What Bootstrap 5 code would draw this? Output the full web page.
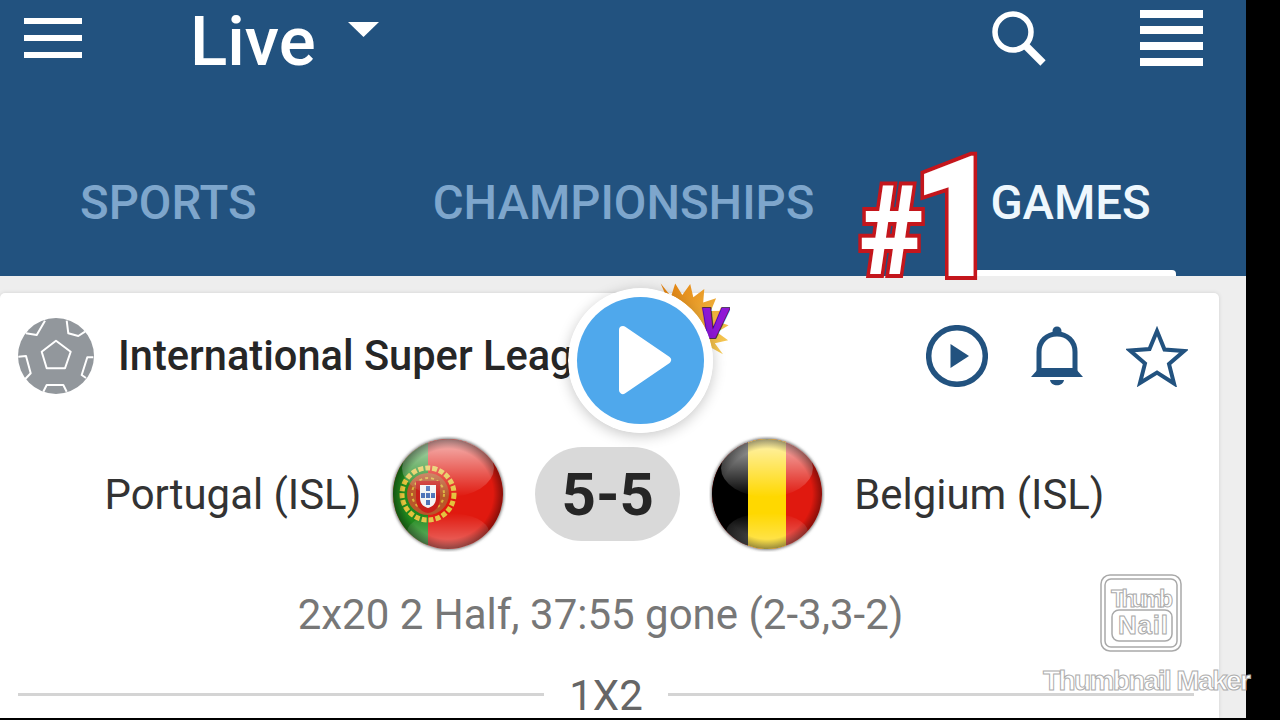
<!DOCTYPE html>
<html lang="en">
<head>
  <meta charset="UTF-8" />
  <title>Live - International Super League</title>
  <link href="https://cdn.jsdelivr.net/npm/bootstrap@5.3.3/dist/css/bootstrap.min.css" rel="stylesheet" />
  <style>
    html, body {
      height: 100%;
      overflow: hidden;
    }
    body {
      background-color: #000;
      font-family: Roboto, "Liberation Sans", sans-serif;
    }
    .app-frame {
      width: 1246px;
      height: 718px;
      background-color: #eeeeee;
      overflow: hidden;
    }
    .app-header {
      height: 276px;
      background-color: #22527f;
      flex-shrink: 0;
    }
    .top-row {
      height: 100px;
      padding-left: 24px;
      padding-right: 43px;
    }
    .burger-icon {
      width: 58px;
      height: 40px;
      margin-top: 18px;
    }
    .page-title {
      margin-left: 108px;
      margin-top: 4px;
      font-size: 69px;
      line-height: 76px;
      font-weight: 500;
      color: #fff;
    }
    .caret-icon {
      width: 31px;
      height: 15px;
      margin-left: 32px;
      margin-top: 22px;
    }
    .search-icon {
      width: 56px;
      height: 56px;
      margin-top: 10px;
    }
    .lines-icon {
      width: 63px;
      height: 56px;
      margin-top: 10px;
      margin-left: 93px;
    }
    .tab-row {
      padding-left: 80px;
      gap: 176px;
      margin-top: 78px;
    }
    .tab-link {
      position: relative;
      font-size: 47.300px;
      line-height: 50px;
      font-weight: 500;
      color: #7ea6cc;
    }
    .tab-link.is-active {
      color: #eef7fd;
    }
    .tab-link.is-active::after {
      content: "";
      position: absolute;
      left: -16px;
      right: -25px;
      top: 92px;
      height: 6px;
      background-color: #fff;
      border-radius: 4px 4px 0 0;
    }
    .match-card {
      width: 1219px;
      margin-top: 17px;
      background-color: #fff;
      border: 0;
      border-radius: 5px 5px 0 0;
      box-shadow: 0 0 4px rgba(0, 0, 0, 0.12);
      flex-grow: 1;
    }
    .league-row {
      height: 125px;
      padding-left: 18px;
      padding-right: 31px;
    }
    .ball-icon {
      width: 76px;
      height: 76px;
    }
    .league-name {
      margin-left: 24px;
      font-size: 41.600px;
      font-weight: 500;
      color: #262626;
      line-height: 48px;
      white-space: nowrap;
    }
    .action-icons {
      gap: 38px;
    }
    .action-icons svg {
      width: 62px;
      height: 62px;
    }
    .score-row {
      height: 112px;
      margin-top: 20px;
      padding-right: 10px;
      gap: 31px;
    }
    .team-name {
      padding-top: 2px;
      font-size: 41.900px;
      line-height: 48px;
      color: #333;
      white-space: nowrap;
    }
    .team-flag {
      width: 116px;
      height: 116px;
      margin: -2px;
    }
    .score-pill {
      width: 145px;
      height: 94px;
      padding-top: 2px;
      border-radius: 47px;
      background-color: #d9d9d9;
      font-size: 60px;
      font-weight: 700;
      color: #262626;
    }
    .match-status {
      margin-top: 41px;
      padding-right: 18px;
      font-size: 42px;
      line-height: 48px;
      color: #777;
    }
    .market-row {
      margin-top: 37px;
      padding-left: 18px;
      padding-right: 25px;
      gap: 25px;
      font-size: 42px;
      line-height: 40px;
      color: #666;
    }
    .market-line {
      height: 3px;
      margin-bottom: 3px;
      background-color: #d4d4d4;
      flex-grow: 1;
    }
    /* things the thumbnail maker put on top of the screenshot */
    .rank-badge {
      position: absolute;
      left: 858px;
      top: 126px;
      height: 160px;
      color: #fff;
      font-family: Roboto, sans-serif;
      font-weight: 900;
      -webkit-text-stroke: 8px #c4161c;
      paint-order: stroke fill;
    }
    .rank-hash {
      position: absolute;
      left: -2px;
      top: 36px;
      font-size: 124px;
      line-height: 140px;
      transform: scaleX(0.88);
    }
    .rank-one {
      position: absolute;
      left: 49px;
      top: 3px;
      font-size: 168px;
      line-height: 180px;
      transform: scaleX(0.9);
    }
    .sticker {
      position: absolute;
      left: 640px;
      top: 275px;
      width: 90px;
      height: 90px;
    }
    .play-overlay {
      position: absolute;
      left: 568px;
      top: 288px;
      width: 145px;
      height: 145px;
      box-shadow: 0 3px 14px rgba(0, 0, 0, 0.22);
      border-radius: 50%;
    }
    .mark-logo {
      position: absolute;
      left: 1100px;
      top: 574px;
      width: 82px;
      height: 78px;
    }
    .mark-text {
      position: absolute;
      left: 1043px;
      top: 664px;
      font-family: "Liberation Sans", sans-serif;
      font-size: 28px;
      line-height: 34px;
      font-weight: 700;
      letter-spacing: -1.600px;
      white-space: nowrap;
      color: #fff;
      -webkit-text-stroke: 1px #adadad;
    }
    .logo-text {
      font-family: "Liberation Sans", sans-serif;
      font-weight: 700;
      fill: #fff;
      stroke: #a9a9a9;
      stroke-width: 1;
    }
  </style>
</head>
<body>
  <div class="app-frame d-flex flex-column">
    <div class="app-header">
      <div class="top-row d-flex align-items-start">
        <svg class="burger-icon" viewBox="0 0 58 40"><path fill="#fff" d="M0 0h58v6H0zM0 17h58v6H0zM0 34h58v6H0z"/></svg>
        <div class="page-title">Live</div>
        <svg class="caret-icon" viewBox="0 0 31 15"><path fill="#fff" d="M0 0h31L15.500 15z"/></svg>
        <svg class="search-icon ms-auto" viewBox="0 0 56 56"><circle cx="22" cy="22" r="18" fill="none" stroke="#fff" stroke-width="5.500"/><path d="M34 35l18 18" stroke="#fff" stroke-width="7.500" fill="none"/></svg>
        <svg class="lines-icon" viewBox="0 0 63 56"><path fill="#fff" d="M0 0h63v8H0zM0 16h63v8H0zM0 32h63v8H0zM0 48h63v8H0z"/></svg>
      </div>
      <div class="tab-row d-flex">
        <div class="tab-link">SPORTS</div>
        <div class="tab-link">CHAMPIONSHIPS</div>
        <div class="tab-link is-active">GAMES</div>
      </div>
    </div>

    <div class="card match-card">
      <div class="league-row d-flex align-items-center">
        <svg class="ball-icon" viewBox="0 0 76 76">
          <circle cx="38" cy="38" r="38" fill="#92979c"/>
          <g fill="none" stroke="#fff" stroke-width="2" stroke-linejoin="round">
            <path d="M38 22.700l14.700 11-5.700 16.600H28.700l-5-16.600z"/>
            <path d="M8 15.300l10.700 1.700L27 2.700M48.700 2.700L50.300 15.300l10 2.700 6.700-4.300M.3 38.700L8 38l4.700 17.300-5.700 6M75.300 39.300h-6l-5.600 17.700 4.300 3M25.300 73.700l3.400-6.700h16.600l3.400 6.700"/>
          </g>
        </svg>
        <div class="league-name">International Super League</div>
        <div class="action-icons d-flex ms-auto">
          <svg viewBox="0 0 62 62"><circle cx="31" cy="31" r="28.300" fill="none" stroke="#22527f" stroke-width="5.500"/><path fill="#22527f" d="M24.500 19L43 31 24.500 43z"/></svg>
          <svg viewBox="0 0 62 62"><path fill="none" stroke="#22527f" stroke-width="5" d="M13 47V27c0-11 8-18 18-18s18 7 18 18v20"/><circle cx="31" cy="6" r="4.500" fill="#22527f"/><path fill="#22527f" d="M5 52l8-9h36l8 9zM24 55h14c-1 7-13 7-14 0z"/></svg>
          <svg viewBox="0 0 62 62"><path fill="none" stroke="#22527f" stroke-width="4" stroke-linejoin="miter" d="M31 6l7.500 18.500 19.500 1.500-15 13 5 19.500L31 47.500 14 58l5-19.500-15-13 19.500-1.500z"/></svg>
        </div>
      </div>

      <div class="score-row d-flex align-items-center justify-content-center">
        <div class="team-name">Portugal (ISL)</div>
        <svg class="team-flag" viewBox="0 0 116 116">
          <defs>
            <radialGradient id="shade" cx="50%" cy="50%" r="50%">
              <stop offset="82%" stop-color="#000" stop-opacity="0"/>
              <stop offset="100%" stop-color="#000" stop-opacity="0.4"/>
            </radialGradient>
            <linearGradient id="shine" x1="0" y1="0" x2="0" y2="1">
              <stop offset="0%" stop-color="#fff" stop-opacity="0.7"/>
              <stop offset="100%" stop-color="#fff" stop-opacity="0"/>
            </linearGradient>
            <linearGradient id="lower" x1="0" y1="0" x2="0" y2="1">
              <stop offset="0%" stop-color="#fff" stop-opacity="0"/>
              <stop offset="100%" stop-color="#fff" stop-opacity="0.4"/>
            </linearGradient>
            <linearGradient id="burst" x1="0" y1="0" x2="1" y2="1">
              <stop offset="0%" stop-color="#e37f0c"/>
              <stop offset="100%" stop-color="#f6cf5a"/>
            </linearGradient>
            <clipPath id="orb"><circle cx="58" cy="58" r="55"/></clipPath>
            <filter id="soft"><feGaussianBlur stdDeviation="1.500"/></filter>
          </defs>
          <circle cx="58" cy="58" r="56" fill="#777" filter="url(#soft)"/>
          <g clip-path="url(#orb)">
            <rect x="0" y="0" width="116" height="116" fill="#e0190f"/>
            <rect x="0" y="0" width="38" height="116" fill="#218a1e"/>
            <circle cx="38" cy="58" r="26" fill="none" stroke="#e3c23c" stroke-width="5" stroke-dasharray="5 2"/>
            <circle cx="38" cy="58" r="21" fill="#b9572a"/>
            <circle cx="38" cy="58" r="16" fill="none" stroke="#d9b13a" stroke-width="2" stroke-dasharray="3 3"/>
            <path fill="#c8201a" d="M26 45h24v17c0 10-6 14-12 15-6-1-12-5-12-15z"/>
            <path fill="#f4f4f4" d="M30 49h16v13c0 6-4 9-8 10-4-1-8-4-8-10z"/>
            <path fill="#4f74b8" d="M36 50h4v5h-4zM31 57h4v5h-4zM36 57h4v5h-4zM41 57h4v5h-4zM36 64h4v5h-4z"/>
            <ellipse cx="58" cy="32" rx="46" ry="29" fill="url(#shine)"/>
            <ellipse cx="58" cy="96" rx="41" ry="19" fill="url(#lower)"/>
            <circle cx="58" cy="58" r="55" fill="url(#shade)"/>
          </g>
        </svg>
        <div class="score-pill d-flex align-items-center justify-content-center">5-5</div>
        <svg class="team-flag" viewBox="0 0 116 116">
          <circle cx="58" cy="58" r="56" fill="#777" filter="url(#soft)"/>
          <g clip-path="url(#orb)">
            <rect x="0" y="0" width="116" height="116" fill="#e0190f"/>
            <rect x="0" y="0" width="39" height="116" fill="#000"/>
            <rect x="39" y="0" width="38" height="116" fill="#ffd800"/>
            <ellipse cx="58" cy="32" rx="46" ry="29" fill="url(#shine)"/>
            <ellipse cx="58" cy="96" rx="41" ry="19" fill="url(#lower)"/>
            <circle cx="58" cy="58" r="55" fill="url(#shade)"/>
          </g>
        </svg>
        <div class="team-name">Belgium (ISL)</div>
      </div>

      <div class="match-status text-center">2x20 2 Half, 37:55 gone (2-3,3-2)</div>

      <div class="market-row d-flex align-items-center">
        <div class="market-line"></div>
        <div>1X2</div>
        <div class="market-line"></div>
      </div>
    </div>
  </div>

  <div class="rank-badge">
    <span class="rank-hash">#</span>
    <span class="rank-one">1</span>
  </div>

  <svg class="sticker" viewBox="0 0 90 90">
    <path fill="url(#burst)" d="M20.700 8.500L31.100 21.400 35.200 8.400 42.300 20 50.200 8.900 53.300 22.200 64.300 14 63.200 27.600 76.100 23.300 70.800 35.900 84.500 35.700 75.600 46.100 88.600 50.200 77 57.300 88.100 65.200 74.800 68.300 83 79.300 41 56z"/>
    <text x="60" y="63" font-family="Roboto, sans-serif" font-size="42" font-weight="900" font-style="italic" fill="#8f17d6" stroke="#2d0c48" stroke-width="1.500" paint-order="stroke fill">V</text>
  </svg>

  <svg class="play-overlay" viewBox="0 0 145 145">
    <circle cx="72.500" cy="72.500" r="72.500" fill="#fff"/>
    <circle cx="72.500" cy="72.500" r="63.500" fill="#4fa8ec"/>
    <path fill="#fff" stroke="#fff" stroke-width="8" stroke-linejoin="round" d="M55 42l44 30-44 30z"/>
  </svg>

  <svg class="mark-logo" viewBox="0 0 82 78">
    <rect x="1" y="1" width="80" height="76" rx="9" fill="#fff" stroke="#a9a9a9" stroke-width="1.500"/>
    <rect x="5" y="5" width="72" height="68" rx="6" fill="#fff" stroke="#a9a9a9" stroke-width="1.500"/>
    <text class="logo-text" x="11" y="33" font-size="23" textLength="62">Thumb</text>
    <rect x="12" y="36" width="60" height="31" rx="7" fill="#fff" stroke="#a9a9a9" stroke-width="1.500"/>
    <text class="logo-text" x="18" y="60" font-size="26" textLength="50">Nail</text>
  </svg>
  <div class="mark-text">Thumbnail Maker</div>

  <script src="https://cdn.jsdelivr.net/npm/bootstrap@5.3.3/dist/js/bootstrap.bundle.min.js"></script>
</body>
</html>
